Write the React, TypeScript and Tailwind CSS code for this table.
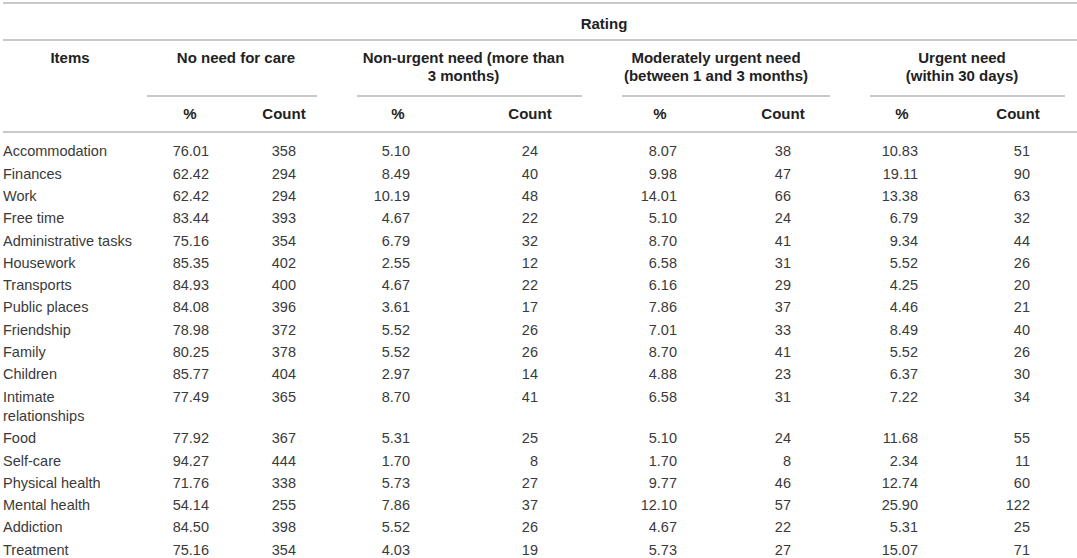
const rows: [string, string, string, string, string, string, string, string, string][] = [
  ["Accommodation", "76.01", "358", "5.10", "24", "8.07", "38", "10.83", "51"],
  ["Finances", "62.42", "294", "8.49", "40", "9.98", "47", "19.11", "90"],
  ["Work", "62.42", "294", "10.19", "48", "14.01", "66", "13.38", "63"],
  ["Free time", "83.44", "393", "4.67", "22", "5.10", "24", "6.79", "32"],
  ["Administrative tasks", "75.16", "354", "6.79", "32", "8.70", "41", "9.34", "44"],
  ["Housework", "85.35", "402", "2.55", "12", "6.58", "31", "5.52", "26"],
  ["Transports", "84.93", "400", "4.67", "22", "6.16", "29", "4.25", "20"],
  ["Public places", "84.08", "396", "3.61", "17", "7.86", "37", "4.46", "21"],
  ["Friendship", "78.98", "372", "5.52", "26", "7.01", "33", "8.49", "40"],
  ["Family", "80.25", "378", "5.52", "26", "8.70", "41", "5.52", "26"],
  ["Children", "85.77", "404", "2.97", "14", "4.88", "23", "6.37", "30"],
  ["Intimate relationships", "77.49", "365", "8.70", "41", "6.58", "31", "7.22", "34"],
  ["Food", "77.92", "367", "5.31", "25", "5.10", "24", "11.68", "55"],
  ["Self-care", "94.27", "444", "1.70", "8", "1.70", "8", "2.34", "11"],
  ["Physical health", "71.76", "338", "5.73", "27", "9.77", "46", "12.74", "60"],
  ["Mental health", "54.14", "255", "7.86", "37", "12.10", "57", "25.90", "122"],
  ["Addiction", "84.50", "398", "5.52", "26", "4.67", "22", "5.31", "25"],
  ["Treatment", "75.16", "354", "4.03", "19", "5.73", "27", "15.07", "71"],
];

// right padding per value column so the numbers line up on their right edge
const valuePad = ["pr-[24px]", "pr-[39px]", "pr-[51px]", "pr-[61px]", "pr-[44px]", "pr-[54px]", "pr-[41px]", "pr-[47px]"];

const groups = [
  { lines: ["No need for care"], text: "pr-[10px]", rule: "ml-0 mr-[18px]" },
  { lines: ["Non-urgent need (more than", "3 months)"], text: "pr-[7px]", rule: "ml-[22px] mr-[17px]" },
  { lines: ["Moderately urgent need", "(between 1 and 3 months)"], text: "pr-[12px]", rule: "ml-[23px] mr-[15px]" },
  { lines: ["Urgent need", "(within 30 days)"], text: "pl-[2px]", rule: "ml-[25px] mr-[12px]" },
];

const Rule = () => <div className="col-span-9 h-[2px] bg-[#c9c9c9]" />;

const App = () => {
  return (
    <div className="w-[1077px] h-[558px] overflow-hidden bg-white pl-[3px] pt-[2px] font-['Liberation_Sans',Arial,sans-serif]">
      <div className="grid grid-cols-[144px_86px_102px_126px_138px_122px_124px_114px_118px]">
        <Rule />

        {/* rating row */}
        <div className="h-[35px]" />
        <div className="col-span-8 h-[35px] flex items-center justify-center pt-[5px] pr-[16px] text-[15px] font-bold text-[#222]">
          Rating
        </div>
        <Rule />

        {/* group headers */}
        <div className="pt-[8px] pr-[10px] text-center text-[15px] leading-[18px] font-bold text-[#222]">Items</div>
        {groups.map((g, i) => (
          <div key={i} className="col-span-2 h-[56px] flex flex-col">
            <div className={`pt-[8px] text-center text-[15px] leading-[18px] font-bold text-[#222] whitespace-nowrap ${g.text}`}>
              {g.lines.map((l, j) => (
                <div key={j}>{l}</div>
              ))}
            </div>
            <div className={`mt-auto h-[2px] bg-[#c9c9c9] ${g.rule}`} />
          </div>
        ))}

        {/* sub headers */}
        <div className="h-[34px]" />
        {groups.map((_, i) => (
          <div key={i} className="contents">
            <div className="h-[34px] flex items-center justify-center text-[15px] font-bold text-[#222]">%</div>
            <div className="h-[34px] flex items-center justify-center text-[15px] font-bold text-[#222]">Count</div>
          </div>
        ))}
        <Rule />

        <div className="col-span-9 h-[8px]" />

        {rows.map((r, i) => (
          <div key={i} className="contents">
            <div className="pr-[10px] py-[1.45px] text-[14.5px] leading-[19.4px] text-[#3a3a3a]">{r[0]}</div>
            {r.slice(1).map((v, j) => (
              <div key={j} className={`py-[1.45px] text-right text-[14.5px] leading-[19.4px] text-[#3a3a3a] ${valuePad[j]}`}>
                {v}
              </div>
            ))}
          </div>
        ))}
      </div>
    </div>
  );
};

export default App;
